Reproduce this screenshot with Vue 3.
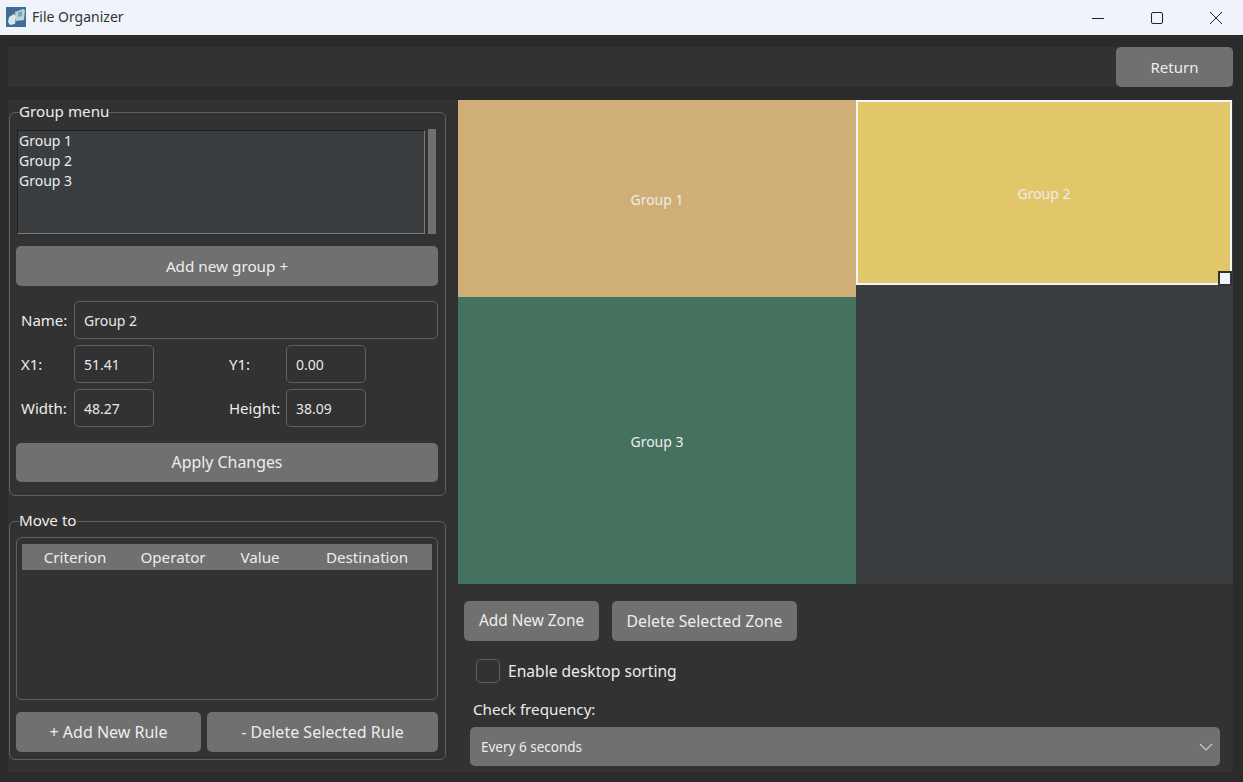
<script setup>
const groups = ['Group 1', 'Group 2', 'Group 3']
const columns = ['Criterion', 'Operator', 'Value', 'Destination']
const zones = [
  { name: 'Group 1', left: 0, top: 0, width: 398, height: 197, color: '#cfae78' },
  { name: 'Group 3', left: 0, top: 197, width: 398, height: 287, color: '#44725e' },
  { name: 'Group 2', left: 398, top: 0, width: 376, height: 185, color: '#e2c76a', selected: true }
]
const zoneStyle = (z) => ({
  left: z.left + 'px',
  top: z.top + 'px',
  width: z.width + 'px',
  height: z.height + 'px',
  background: z.color
})
</script>

<template>
  <div class="window">
    <header class="titlebar">
      <svg class="app-icon" width="20" height="20" viewBox="0 0 20 20">
        <rect width="20" height="20" fill="#3f6d96" />
        <path d="M9 5 L17 2 L19 3 L18 13 L10 14 Z" fill="#b9d3da" />
        <path d="M12 5 L16 4 L16 9 L12 10 Z" fill="#7fa6b8" />
        <path d="M3 10 L8 7 L10 9 L9 17 L4 18 L2 15 Z" fill="#dbe8ea" />
      </svg>
      <span class="title">File Organizer</span>
      <div class="controls">
        <svg width="14" height="14" viewBox="0 0 14 14"><path d="M1 7.5H13" stroke="#222" fill="none" /></svg>
        <svg width="14" height="14" viewBox="0 0 14 14"><rect x="1.5" y="1.5" width="11" height="11" rx="1.5" stroke="#222" fill="none" /></svg>
        <svg width="14" height="14" viewBox="0 0 14 14"><path d="M1 1L13 13M13 1L1 13" stroke="#222" fill="none" /></svg>
      </div>
    </header>

    <div class="client">
      <div class="toolbar">
        <button class="btn return">Return</button>
      </div>

      <div class="main">
        <aside class="side">
          <fieldset class="box first">
            <legend>Group menu</legend>
            <div class="list-row">
              <ul class="list">
                <li v-for="g in groups" :key="g">{{ g }}</li>
              </ul>
              <div class="scroll"></div>
            </div>
            <button class="btn wide add">Add new group +</button>

            <div class="form">
              <label class="lbl">Name:</label>
              <div class="input name">Group 2</div>
              <label class="lbl">X1:</label>
              <div class="input">51.41</div>
              <label class="lbl second">Y1:</label>
              <div class="input">0.00</div>
              <label class="lbl">Width:</label>
              <div class="input">48.27</div>
              <label class="lbl second">Height:</label>
              <div class="input">38.09</div>
            </div>

            <button class="btn wide apply">Apply Changes</button>
          </fieldset>

          <fieldset class="box rules">
            <legend>Move to</legend>
            <div class="table">
              <div class="thead">
                <span v-for="c in columns" :key="c">{{ c }}</span>
              </div>
            </div>
            <div class="rule-btns">
              <button class="btn add-rule">+ Add New Rule</button>
              <button class="btn del-rule">- Delete Selected Rule</button>
            </div>
          </fieldset>
        </aside>

        <section class="right">
          <div class="canvas">
            <div
              v-for="z in zones"
              :key="z.name"
              class="zone"
              :class="{ selected: z.selected }"
              :style="zoneStyle(z)"
            >
              {{ z.name }}
              <i v-if="z.selected" class="handle"></i>
            </div>
          </div>

          <div class="zone-btns">
            <button class="btn zone-btn add-zone">Add New Zone</button>
            <button class="btn zone-btn del-zone">Delete Selected Zone</button>
          </div>

          <div class="check-row">
            <span class="check"></span>
            <span class="check-text">Enable desktop sorting</span>
          </div>

          <div class="freq-label">Check frequency:</div>
          <div class="combo">
            <span>Every 6 seconds</span>
            <svg width="14" height="8" viewBox="0 0 14 8"><path d="M1 1L7 7L13 1" stroke="#c9ccd0" stroke-width="1.2" fill="none" /></svg>
          </div>
        </section>
      </div>
    </div>
  </div>
</template>

<style>
html, body { margin: 0; background: #2b2b2b; }
</style>

<style scoped>
.window {
  width: 1243px;
  height: 782px;
  display: flex;
  flex-direction: column;
  overflow: hidden;
  background: #2b2b2b;
  color: #ededed;
  font: 15px/20px "Noto Sans", "Open Sans", sans-serif;
}
.titlebar {
  flex: none;
  height: 35px;
  display: flex;
  align-items: center;
  background: #f0f3f9;
  color: #333;
  padding-left: 6px;
}
.app-icon { margin-right: 6px; margin-top: -2px; }
.title { font-size: 14px; margin-top: -2px; }
.controls {
  margin-left: auto;
  display: flex;
  gap: 45px;
  padding-right: 20px;
  align-items: center;
}
.client {
  flex: 1;
  padding: 12px 10px 10px 8px;
  display: flex;
  flex-direction: column;
  gap: 13px;
  min-height: 0;
}
.toolbar {
  flex: none;
  height: 40px;
  background: #323232;
  display: flex;
  justify-content: flex-end;
}
.btn {
  border: 0;
  border-radius: 5px;
  background: #707070;
  color: #ededed;
  font: inherit;
  padding: 0;
  display: block;
}
.return { width: 117px; height: 40px; }
.main {
  flex: 1;
  display: flex;
  min-height: 0;
  background: #323232;
}
.side {
  flex: none;
  width: 450px;
  padding: 2px 0 0 1px;
  box-sizing: border-box;
}
.box {
  margin: 0;
  width: 437px;
  box-sizing: border-box;
  border: 1px solid #606060;
  border-radius: 6px;
  padding: 7px 7px 13px 6px;
  min-width: 0;
}
.box legend {
  padding: 0 0 2px;
  margin-left: 3px;
  line-height: 18px;
  font-size: 15.2px;
}
.list-row {
  display: flex;
  height: 105px;
  padding-left: 1px;
}
.list {
  list-style: none;
  margin: 1px 0 0;
  padding: 0 1px;
  width: 408px;
  height: 104px;
  box-sizing: border-box;
  background: #3a3e41;
  border: 1px solid;
  border-color: #202020 #7a7a7a #7a7a7a #202020;
  font-size: 14px;
}
.list li { height: 20px; line-height: 20px; }
.scroll {
  width: 8px;
  margin-left: 3px;
  background: #707070;
}
.wide { width: 422px; height: 40px; }
.add { margin-top: 12px; font-size: 15.25px; }
.form {
  margin-top: 15px;
  display: grid;
  grid-template-columns: 53px 80px 75px 57px 80px;
  grid-auto-rows: 38px;
  row-gap: 6px;
  align-items: center;
  padding-left: 5px;
}
.lbl { white-space: nowrap; }
.input {
  box-sizing: border-box;
  height: 38px;
  border: 1px solid #606060;
  border-radius: 5px;
  padding-left: 9px;
  line-height: 37px;
  font-size: 14px;
  color: #e8e8e8;
}
.name { grid-column: 2 / 6; width: 364px; }
.form .second { grid-column: 4; }
.apply { margin-top: 16px; height: 39px; padding-bottom: 1px; font-size: 15.9px; }
.rules {
  margin-top: 15px;
  padding: 6px 7px 7px 6px;
}
.table {
  box-sizing: border-box;
  height: 163px;
  border: 1px solid #606060;
  border-radius: 6px;
  padding: 6px 5px;
}
.thead {
  height: 26px;
  display: grid;
  grid-template-columns: 106px 90px 84px 130px;
  background: #707070;
  text-align: center;
  line-height: 26px;
  font-size: 15.2px;
}
.rule-btns {
  margin-top: 12px;
  display: flex;
  gap: 6px;
}
.rule-btns .btn { height: 40px; font-size: 16px; }
.add-rule { width: 185px; }
.del-rule { width: 231px; }
.right {
  flex: 1;
  min-width: 0;
  display: flex;
  flex-direction: column;
}
.canvas {
  flex: none;
  position: relative;
  height: 484px;
  background: #3a3e41;
}
.zone {
  position: absolute;
  box-sizing: border-box;
  display: flex;
  align-items: center;
  justify-content: center;
  font-size: 14px;
  padding-top: 2px;
}
.selected { border: 2px solid #f5f5f5; }
.handle {
  position: absolute;
  right: -2px;
  bottom: -3px;
  width: 14px;
  height: 15px;
  box-sizing: border-box;
  background: #f0f3f9;
  border: 2px solid #2f3336;
}
.zone-btns {
  display: flex;
  gap: 13px;
  margin: 17px 0 0 6px;
}
.zone-btn { height: 40px; }
.add-zone { width: 135px; font-size: 15.4px; }
.del-zone { width: 185px; font-size: 15.8px; }
.check-row {
  display: flex;
  align-items: center;
  gap: 8px;
  margin: 18px 0 0 18px;
  height: 24px;
}
.check-text { font-size: 15.6px; }
.check {
  box-sizing: border-box;
  width: 24px;
  height: 24px;
  border: 1px solid #606060;
  border-radius: 5px;
}
.freq-label { margin: 16px 0 0 15px; font-size: 15.2px; }
.combo {
  box-sizing: border-box;
  margin: 8px 13px 0 12px;
  height: 39px;
  border-radius: 5px;
  background: #707070;
  display: flex;
  align-items: center;
  justify-content: space-between;
  padding: 0 7px 0 11px;
  font-size: 13.5px;
}
</style>
